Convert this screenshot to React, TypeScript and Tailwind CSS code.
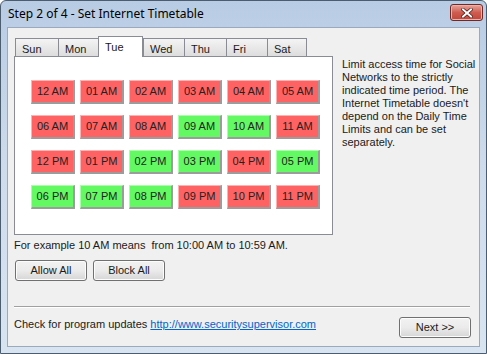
import React from 'react';

const days = [
  { name: 'Sun', w: 'w-[43px]' },
  { name: 'Mon', w: 'w-[40px]' },
  { name: 'Tue', w: 'w-[45px]', active: true },
  { name: 'Wed', w: 'w-[41px]' },
  { name: 'Thu', w: 'w-[42px]' },
  { name: 'Fri', w: 'w-[41px]' },
  { name: 'Sat', w: 'w-[40px]' },
];

// true = allowed (green)
const hours: { label: string; on: boolean }[] = [
  { label: '12 AM', on: false }, { label: '01 AM', on: false }, { label: '02 AM', on: false },
  { label: '03 AM', on: false }, { label: '04 AM', on: false }, { label: '05 AM', on: false },
  { label: '06 AM', on: false }, { label: '07 AM', on: false }, { label: '08 AM', on: false },
  { label: '09 AM', on: true }, { label: '10 AM', on: true }, { label: '11 AM', on: false },
  { label: '12 PM', on: false }, { label: '01 PM', on: false }, { label: '02 PM', on: true },
  { label: '03 PM', on: true }, { label: '04 PM', on: false }, { label: '05 PM', on: true },
  { label: '06 PM', on: true }, { label: '07 PM', on: true }, { label: '08 PM', on: true },
  { label: '09 PM', on: false }, { label: '10 PM', on: false }, { label: '11 PM', on: false },
];

const WinButton = ({ children, className = '' }: { children: React.ReactNode; className?: string }) => (
  <button
    className={`h-[21px] rounded-[3px] border border-[#707070] bg-gradient-to-b from-[#f2f2f2] via-[#ebebeb] to-[#d6d6d6] text-[11px] text-[#1a1a1a] shadow-[inset_0_0_0_1px_#fcfcfc] ${className}`}
  >
    {children}
  </button>
);

export default function App() {
  return (
    <div className="w-[487px] h-[354px] flex flex-col bg-gradient-to-b from-[#b8cce4] via-[#cfdcec] to-[#d9e4f1] border border-[#4d5d70] rounded-t-[6px] overflow-hidden font-['Liberation_Sans',Arial,sans-serif] text-[11px] text-[#1a1a1a]">
      {/* title bar */}
      <div className="h-[26px] flex items-center justify-between pl-[7px] pr-[3px] shrink-0">
        <span className="font-['Noto_Sans',sans-serif] text-[12px] text-black -mt-[1px]">Step 2 of 4 - Set Internet Timetable</span>
        <div className="w-[33px] h-[17px] -mt-[3px] rounded-[3px] border border-[#6e2a26] bg-gradient-to-b from-[#e6a49c] via-[#cf5c50] to-[#c0463a] flex items-center justify-center shadow-[inset_0_0_0_1px_#eeb0a8]">
          <svg width="12" height="10" viewBox="0 0 12 10">
            <path d="M2 1.5 L10 8.5 M10 1.5 L2 8.5" stroke="#4a1a16" strokeWidth="3.4" strokeLinecap="square" />
            <path d="M2 1.5 L10 8.5 M10 1.5 L2 8.5" stroke="#ffffff" strokeWidth="2" strokeLinecap="square" />
          </svg>
        </div>
      </div>

      {/* client area */}
      <div className="flex-1 mx-[6px] mb-[6px] bg-[#f0f0f0] border border-[#9aa9bb] flex flex-col pl-[6px] pr-[8px] pt-[8px]">
        <div className="flex">
          <div className="flex flex-col">
            {/* tabs */}
            <div className="flex items-end h-[20px] pl-[1px]">
              {days.map((d) =>
                d.active ? (
                  <div
                    key={d.name}
                    className={`${d.w} h-[21px] -mb-[1px] relative z-10 bg-white border border-b-0 border-[#898c95] pl-[6px] pt-[2px] text-[11px]`}
                  >
                    {d.name}
                  </div>
                ) : (
                  <div
                    key={d.name}
                    className={`${d.w} h-[18px] bg-gradient-to-b from-[#f4f4f4] to-[#dddddd] border border-b-0 border-r-0 last:border-r border-[#898c95] pl-[6px] pt-[2px] text-[11px]`}
                  >
                    {d.name}
                  </div>
                )
              )}
            </div>
            {/* panel */}
            <div className="w-[319px] h-[179px] bg-white border border-[#898c95] pl-[16px] pt-[23px]">
              <div className="grid grid-cols-[repeat(6,44px)] gap-x-[5px] gap-y-[11px]">
                {hours.map((h) => (
                  <div
                    key={h.label}
                    className={`h-[24px] flex items-center justify-center text-[11px] text-[#222] border-t border-l border-r-2 border-b-2 ${
                      h.on
                        ? 'bg-[#62f962] border-t-[#a8ffa8] border-l-[#a8ffa8] border-r-[#9c9c9c] border-b-[#9c9c9c]'
                        : 'bg-[#ff6262] border-t-[#ffb0b0] border-l-[#ffb0b0] border-r-[#9c9c9c] border-b-[#9c9c9c]'
                    }`}
                  >
                    {h.label}
                  </div>
                ))}
              </div>
            </div>
          </div>

          {/* description */}
          <div className="ml-[9px] mt-[22px] leading-[13px] whitespace-nowrap">
            <div>Limit access time for Social</div>
            <div>Networks to the strictly</div>
            <div>indicated time period. The</div>
            <div>Internet Timetable doesn't</div>
            <div>depend on the Daily Time</div>
            <div>Limits and can be set</div>
            <div>separately.</div>
          </div>
        </div>

        <div className="mt-[3px] h-[15px] leading-[15px] whitespace-pre">For example 10 AM means  from 10:00 AM to 10:59 AM.</div>

        <div className="flex gap-[6px] mt-[7px] pl-[1px]">
          <WinButton className="w-[72px]">Allow All</WinButton>
          <WinButton className="w-[72px]">Block All</WinButton>
        </div>

        <div className="mt-[25px] mr-[1px] h-[2px] border-t border-[#a0a0a0] border-b border-b-white" />

        <div className="flex items-center justify-between mt-[9px]">
          <div className="-mt-[6px]">
            Check for program updates{' '}
            <a href="#" className="text-[#0066cc] underline">http://www.securitysupervisor.com</a>
          </div>
          <WinButton className="w-[72px]">Next &gt;&gt;</WinButton>
        </div>
      </div>
    </div>
  );
}
